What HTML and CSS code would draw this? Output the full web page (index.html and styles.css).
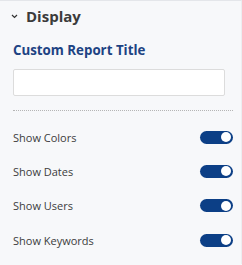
FILE: index.html
```html
<!DOCTYPE html>
<html>
<head>
<meta charset="utf-8">
<link rel="stylesheet" href="styles.css">
</head>
<body>
<div class="panel">
  <div class="header">
    <svg class="chev" width="7" height="5" viewBox="0 0 7 5"><path d="M1 1 L3.5 3.5 L6 1" fill="none" stroke="#333" stroke-width="1.2"/></svg>
    <span class="title">Display</span>
  </div>
  <div class="body">
    <label class="field-label">Custom Report Title</label>
    <input class="text-input" type="text">
    <div class="divider"></div>
    <div class="rows">
      <div class="row"><span>Show Colors</span><span class="toggle"><span class="knob"></span></span></div>
      <div class="row"><span>Show Dates</span><span class="toggle"><span class="knob"></span></span></div>
      <div class="row"><span>Show Users</span><span class="toggle"><span class="knob"></span></span></div>
      <div class="row"><span>Show Keywords</span><span class="toggle"><span class="knob"></span></span></div>
    </div>
  </div>
</div>
</body>
</html>
```
FILE: styles.css
```css
html, body { margin: 0; padding: 0; background: #f7f8fa; }
body { font-family: "Open Sans", sans-serif; width: 242px; height: 265px; overflow: hidden; }
.panel { border-top: 1px solid #e4e6ea; border-right: 1px solid #eceef1; height: 264px; box-sizing: border-box; }
.header { display: flex; align-items: center; height: 30px; padding-left: 11px; }
.chev { margin-right: 8px; margin-top: 1px; }
.title { font-size: 15px; font-weight: 700; color: #3b3b3b; }
.body { padding: 10px 8px 0 13px; display: flex; flex-direction: column; }
.field-label { font-size: 13.3px; font-weight: 700; color: #1d4383; line-height: 18px; }
.text-input { margin-top: 10px; width: 212px; height: 27px; box-sizing: border-box; border: 1px solid #dcdcdc; border-radius: 2px; background: #fff; }
.divider { margin-top: 14px; border-top: 1px dotted #b5b5b5; }
.rows { display: flex; flex-direction: column; padding-top: 9px; }
.row { display: flex; justify-content: space-between; align-items: center; height: 34.3px; font-size: 11px; color: #3c3c3c; }
.toggle { width: 33px; height: 13px; border-radius: 7px; background: #0c3f86; position: relative; }
.knob { position: absolute; right: 2px; top: 1.5px; width: 10px; height: 10px; border-radius: 50%; background: #fff; }
```
